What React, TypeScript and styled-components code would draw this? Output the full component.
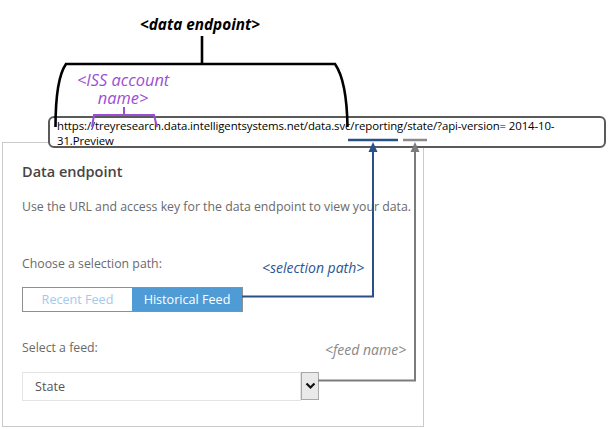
import React from "react";
import styled, { createGlobalStyle } from "styled-components";

const GlobalStyle = createGlobalStyle`
  html, body {
    margin: 0;
    padding: 0;
    background: #ffffff;
  }
  body {
    font-family: "Open Sans", "Noto Sans", sans-serif;
  }
`;

const Canvas = styled.div`
  position: relative;
  width: 609px;
  height: 429px;
  overflow: hidden;
  background: #ffffff;
`;

const TopBand = styled.div`
  height: 116px;
`;

const Callout = styled.div<{ $x: number; $y: number; $color: string; $size: number; $bold?: boolean }>`
  position: absolute;
  left: ${(p) => p.$x}px;
  top: ${(p) => p.$y}px;
  color: ${(p) => p.$color};
  font-size: ${(p) => p.$size}px;
  font-style: italic;
  font-weight: ${(p) => (p.$bold ? 700 : 400)};
  line-height: 18px;
  text-align: center;
  white-space: nowrap;
  z-index: 4;
`;

const UrlBox = styled.div`
  position: relative;
  z-index: 2;
  box-sizing: border-box;
  margin-left: 48px;
  width: 558px;
  height: 32px;
  padding: 0 0 0 7px;
  border: 2px solid #5a5a5a;
  border-radius: 6px;
  background: #ffffff;
  color: #000000;
  font-size: 11.4px;
  line-height: 15px;
  letter-spacing: -0.1px;
  white-space: nowrap;
`;

const Panel = styled.section`
  position: relative;
  z-index: 1;
  box-sizing: border-box;
  margin: -6px 0 0 2px;
  width: 422px;
  height: 285px;
  padding: 19px 0 0 19px;
  border: 1px solid #cacaca;
  background: #ffffff;
  display: flex;
  flex-direction: column;
  align-items: flex-start;
`;

const Title = styled.h2`
  margin: 0;
  font-size: 14.5px;
  font-weight: 600;
  line-height: 20px;
  color: #454545;
`;

const Text = styled.p<{ $gap: number }>`
  margin: ${(p) => p.$gap}px 0 0;
  font-size: 12.3px;
  line-height: 20px;
  color: #6a6a6a;
`;

const Toggle = styled.div`
  margin-top: 13px;
  display: flex;
  height: 25px;
  box-sizing: border-box;
  border: 1px solid #8f8f8f;
`;

const ToggleOption = styled.button<{ $active?: boolean }>`
  width: ${(p) => (p.$active ? 110 : 109)}px;
  height: 100%;
  border: none;
  padding: 0;
  font-family: inherit;
  font-size: 12.6px;
  background: ${(p) => (p.$active ? "#4f9bd5" : "#ffffff")};
  color: ${(p) => (p.$active ? "#ffffff" : "#a3c9ec")};
`;

const SelectRow = styled.div`
  margin-top: 14px;
  display: flex;
  align-items: flex-start;
`;

const SelectField = styled.div`
  box-sizing: border-box;
  width: 279px;
  height: 29px;
  padding-left: 12px;
  display: flex;
  align-items: center;
  border: 1px solid #e4e4e4;
  font-size: 12.6px;
  color: #555555;
`;

const SelectButton = styled.div`
  box-sizing: border-box;
  width: 18px;
  height: 28px;
  display: flex;
  align-items: center;
  justify-content: center;
  border: 1px solid #a8a8a8;
  background: #e9e9e9;
`;

const Overlay = styled.svg`
  position: absolute;
  left: 0;
  top: 0;
  z-index: 3;
  pointer-events: none;
`;

export default function App() {
  return (
    <>
      <GlobalStyle />
      <Canvas>
        <TopBand />
        <Callout $x={140} $y={15} $color="#000000" $size={15.3} $bold>
          &lt;data endpoint&gt;
        </Callout>
        <Callout $x={77} $y={71} $color="#9a4fd4" $size={16.4}>
          &lt;ISS account
          <br />
          name&gt;
        </Callout>
        <Callout $x={262} $y={259} $color="#2a5595" $size={14}>
          &lt;selection path&gt;
        </Callout>
        <Callout $x={325} $y={341} $color="#888888" $size={14}>
          &lt;feed name&gt;
        </Callout>

        <UrlBox>
          https://treyresearch.data.intelligentsystems.net/data.svc/reporting/state/?api-version= 2014-10-
          <br />
          31.Preview
        </UrlBox>

        <Panel>
          <Title>Data endpoint</Title>
          <Text $gap={15}>Use the URL and access key for the data endpoint to view your data.</Text>
          <Text $gap={37}>Choose a selection path:</Text>
          <Toggle>
            <ToggleOption>Recent Feed</ToggleOption>
            <ToggleOption $active>Historical Feed</ToggleOption>
          </Toggle>
          <Text $gap={26}>Select a feed:</Text>
          <SelectRow>
            <SelectField>State</SelectField>
            <SelectButton>
              <svg width="11" height="8" viewBox="0 0 11 8">
                <polyline points="1.5,1.5 5.5,5.5 9.5,1.5" fill="none" stroke="#111" strokeWidth="2.2" />
              </svg>
            </SelectButton>
          </SelectRow>
        </Panel>

        <Overlay width="609" height="429" viewBox="0 0 609 429">
          {/* data endpoint brace */}
          <path d="M202 36 V64" stroke="#000" strokeWidth="2.6" fill="none" />
          <path d="M55.5 127 C55.5 95 59 74 66 64 H335 C342 74 347 95 347.5 127" stroke="#000" strokeWidth="2.6" fill="none" />
          {/* account name bracket */}
          <path d="M124 107 V115" stroke="#9a4fd4" strokeWidth="2" fill="none" />
          <path d="M92 127 L94 115 H154 L157 127" stroke="#9a4fd4" strokeWidth="2" fill="none" />
          {/* selection path */}
          <path d="M348 140 H398" stroke="#2a5088" strokeWidth="2.5" fill="none" />
          <path d="M373 149 V296.5 H242" stroke="#2a5088" strokeWidth="2" fill="none" />
          <polygon points="373,142 368.5,152 377.5,152" fill="#2a5088" />
          {/* feed name */}
          <path d="M403 140 H427" stroke="#8a8a8a" strokeWidth="2.5" fill="none" />
          <path d="M415 149 V380.5 H318" stroke="#7c7c7c" strokeWidth="2" fill="none" />
          <polygon points="415,142 410.5,152 419.5,152" fill="#7c7c7c" />
        </Overlay>
      </Canvas>
    </>
  );
}
